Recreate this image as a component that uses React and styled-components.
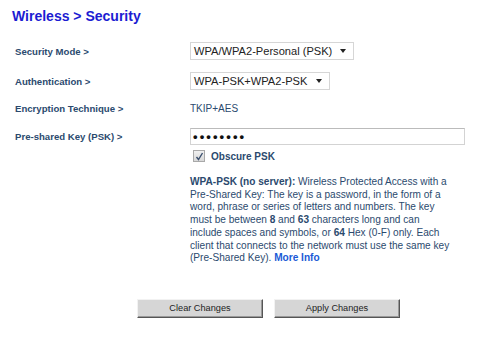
import React from "react";
import styled, { createGlobalStyle } from "styled-components";

const Global = createGlobalStyle`
  html, body { margin: 0; padding: 0; background: #fff; }
  body { font-family: "Liberation Sans", Arial, sans-serif; }
`;

const Page = styled.div`
  width: 500px;
  height: 341px;
  padding: 8px 0 0 12px;
  box-sizing: border-box;
  display: flex;
  flex-direction: column;
`;

const Title = styled.h1`
  margin: 0;
  font-size: 14px;
  line-height: 17px;
  font-weight: bold;
  color: #1c1cd2;
`;

const Form = styled.div`
  display: flex;
  flex-direction: column;
  padding-left: 3px;
`;

const Row = styled.div`
  display: flex;
  align-items: center;
  height: ${(p) => p.$h || 18}px;
  margin-top: ${(p) => p.$top || 0}px;
`;

const Label = styled.div`
  width: 175px;
  flex: none;
  font-size: 9.6px;
  font-weight: bold;
  color: #2b4a6e;
  white-space: nowrap;
`;

const SelectBox = styled.div`
  box-sizing: border-box;
  width: ${(p) => p.$w}px;
  height: 18px;
  border: 1px solid #d6d6d6;
  background: #fff;
  display: flex;
  align-items: center;
  justify-content: space-between;
  padding: 0 7px 0 3px;
  font-size: 11.1px;
  color: #222;
  white-space: nowrap;
`;

const Arrow = styled.span`
  width: 0;
  height: 0;
  border-left: 3px solid transparent;
  border-right: 3px solid transparent;
  border-top: 4px solid #222;
`;

const Value = styled.div`
  font-size: 10px;
  color: #2b4a6e;
`;

const KeyInput = styled.input`
  box-sizing: border-box;
  width: 275px;
  height: 17px;
  border: 1px solid #d3d3d3;
  border-top-color: #bbb;
  padding: 0 2px;
  margin: 0;
  font-family: "Liberation Sans", Arial, sans-serif;
  font-size: 13px;
  font-weight: bold;
  letter-spacing: 2.1px;
  color: #111;
  outline: none;
`;

const Indent = styled.div`
  padding-left: 175px;
`;

const CheckRow = styled.label`
  display: flex;
  align-items: center;
  gap: 6px;
  margin-top: 5px;
  padding-left: 3px;
  font-size: 10px;
  font-weight: bold;
  color: #2b4a6e;
`;

const CheckBox = styled.span`
  box-sizing: border-box;
  width: 12px;
  height: 12px;
  border: 1px solid #a9a9a9;
  background: linear-gradient(#f0f0f0, #d8d8d8);
  display: flex;
  align-items: center;
  justify-content: center;
`;

const Help = styled.p`
  margin: 14px 0 0 0;
  width: 300px;
  font-size: 10.1px;
  line-height: 12.7px;
  color: #2b4a6e;
  white-space: nowrap;
`;

const More = styled.a`
  color: #1a5ad6;
  font-weight: bold;
  text-decoration: none;
`;

const Buttons = styled.div`
  display: flex;
  gap: 11px;
  margin-top: 34px;
  padding-left: 122px;
`;

const Button = styled.button`
  box-sizing: border-box;
  width: 126px;
  height: 19px;
  margin: 0;
  padding: 0;
  background: #d6d6d6;
  border: 1px solid;
  border-color: #f2f2f2 #555 #555 #f2f2f2;
  box-shadow: inset -1px -1px 0 #999;
  font-family: "Liberation Sans", Arial, sans-serif;
  font-size: 9.2px;
  color: #222;
`;

export default function App() {
  return (
    <>
      <Global />
      <Page>
        <Title>Wireless &gt; Security</Title>
        <Form>
          <Row $top={17}>
            <Label>Security Mode &gt;</Label>
            <SelectBox $w={164}>
              WPA/WPA2-Personal (PSK)
              <Arrow />
            </SelectBox>
          </Row>
          <Row $top={12}>
            <Label>Authentication &gt;</Label>
            <SelectBox $w={140}>
              WPA-PSK+WPA2-PSK
              <Arrow />
            </SelectBox>
          </Row>
          <Row $top={9}>
            <Label>Encryption Technique &gt;</Label>
            <Value>TKIP+AES</Value>
          </Row>
          <Row $top={11} $h={17}>
            <Label>Pre-shared Key (PSK) &gt;</Label>
            <KeyInput type="text" defaultValue={"\u2022\u2022\u2022\u2022\u2022\u2022\u2022\u2022"} readOnly />
          </Row>
          <Indent>
            <CheckRow>
              <CheckBox>
                <svg width="9" height="9" viewBox="0 0 9 9">
                  <path d="M1.5 5 L3.5 7.5 L7.5 1" fill="none" stroke="#3a4f6e" strokeWidth="1.4" />
                </svg>
              </CheckBox>
              Obscure PSK
            </CheckRow>
            <Help>
              <b>WPA-PSK (no server):</b> Wireless Protected Access with a
              <br />
              Pre-Shared Key: The key is a password, in the form of a
              <br />
              word, phrase or series of letters and numbers. The key
              <br />
              must be between <b>8</b> and <b>63</b> characters long and can
              <br />
              include spaces and symbols, or <b>64</b> Hex (0-F) only. Each
              <br />
              client that connects to the network must use the same key
              <br />
              (Pre-Shared Key). <More href="#">More Info</More>
            </Help>
          </Indent>
          <Buttons>
            <Button>Clear Changes</Button>
            <Button>Apply Changes</Button>
          </Buttons>
        </Form>
      </Page>
    </>
  );
}
